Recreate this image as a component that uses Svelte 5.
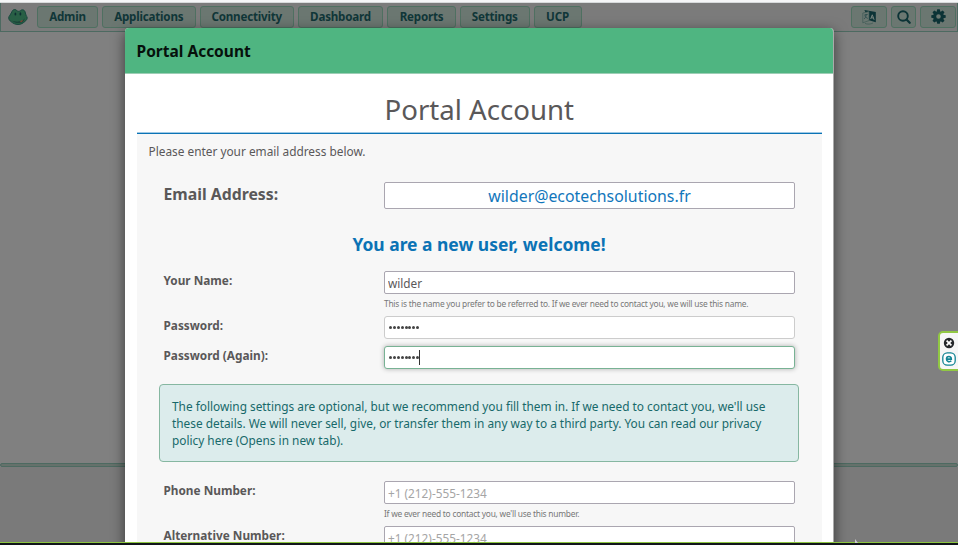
<script>
  const tabs = [
    { label: 'Admin', width: 61 },
    { label: 'Applications', width: 93.5 },
    { label: 'Connectivity', width: 94.5 },
    { label: 'Dashboard', width: 85 },
    { label: 'Reports', width: 69 },
    { label: 'Settings', width: 69.5 },
    { label: 'UCP', width: 48 }
  ];
  const teeth = [0, 45, 90, 135, 180, 225, 270, 315];
</script>

<div class="screen">
  <div class="top-edge"></div>
  <nav>
    <svg class="frog" width="20" height="18" viewBox="0 0 20 18">
      <path d="M1.5 8C0 9.3.5 11.8 3 13.6c2.2 1.8 4.2 2.9 7 2.9 3.2 0 4.9-1.4 7-3.1 2.3-1.9 2.9-4 1.3-5.4L17.4 5C16.8 1.6 14.3 1 12.4 2.7c-.9.7-2.2.8-3.2.3C7.6.8 4.8 1 3.8 4Z" fill="#285f45" stroke="#19483f" />
      <path d="M3 12c2 1.6 6 2.2 9.3 1.3 2-.4 3.6-1.8 4.4-3.4-.1 2.6-2.3 4.6-4.3 4.7-3 .6-6.4.1-9.4-2.6Z" fill="#183c36" />
      <ellipse cx="7.4" cy="6" rx=".9" ry="1.6" fill="#0d2c31" />
      <ellipse cx="12.4" cy="5.9" rx=".9" ry="1.6" fill="#0d2c31" />
      <path d="M11.8 13.4l2.6-1.5.4 1.1-1.5 1.1z" fill="#8d4332" />
    </svg>
    <div class="tabs">
      {#each tabs as tab}
        <button style="width:{tab.width}px">{tab.label}</button>
      {/each}
    </div>
    <div class="tools">
      <button class="wide" aria-label="Language">
        <svg width="15" height="16" viewBox="0 0 15 16">
          <path d="M2.4 1 13.8 3v10.2L7 11.3Z" fill="#0c3336" />
          <path d="M.8 4 7 2.6v9L.8 13.8Z" fill="#6b7771" stroke="#3d5a56" stroke-width=".7" />
          <path d="M2.2 6.2 5.7 5.4M4 5v1c0 2-1 3.3-2 4m1-2.7c.8 1 1.6 1.8 2.8 2.1" fill="none" stroke="#24484a" stroke-width=".8" />
          <path d="m8.7 10 1.6-4.2 1.8 5M9.2 8.6l2.2.5" fill="none" stroke="#79857f" stroke-width="1" />
          <path d="M3 14.4c2.2 1 5.6 1 8-.4" fill="none" stroke="#3d5a56" stroke-width=".7" />
        </svg>
      </button>
      <button class="narrow" aria-label="Search">
        <svg width="14" height="14" viewBox="0 0 14 14">
          <circle cx="6" cy="6" r="4.8" fill="none" stroke="#0c3336" stroke-width="1.9" />
          <path d="m9.5 9.5 3.2 3.3" stroke="#0c3336" stroke-width="2.2" stroke-linecap="round" />
        </svg>
      </button>
      <button class="wide" aria-label="Preferences">
        <svg width="15" height="15" viewBox="-7.5 -7.5 15 15">
          {#each teeth as angle}
            <path d="M-1.8-4.4-1.3-7.2h2.6l.5 2.8Z" transform="rotate({angle})" fill="#0c3336" />
          {/each}
          <circle r="3.8" fill="none" stroke="#0c3336" stroke-width="3" />
        </svg>
      </button>
    </div>
  </nav>
  <main></main>
  <div class="splitter"></div>
  <div class="lower"></div>
  <div class="taskbar"></div>

  <section class="dialog">
    <header>Portal Account</header>
    <div class="content">
      <h1>Portal Account</h1>
      <div class="panel">
        <p class="intro">Please enter your email address below.</p>
        <div class="row email">
          <label for="email">Email Address:</label>
          <input id="email" value="wilder@ecotechsolutions.fr" />
        </div>
        <h2>You are a new user, welcome!</h2>
        <div class="row name">
          <label for="name">Your Name:</label>
          <div class="field">
            <input id="name" value="wilder" />
            <small>This is the name you prefer to be referred to. If we ever need to contact you, we will use this name.</small>
          </div>
        </div>
        <div class="row password">
          <label for="pw">Password:</label>
          <div class="box" id="pw"><span class="dots">{#each teeth as _}<i></i>{/each}</span></div>
        </div>
        <div class="row again">
          <label for="pw2">Password (Again):</label>
          <div class="box focused" id="pw2"><span class="dots">{#each teeth as _}<i></i>{/each}</span><span class="caret"></span></div>
        </div>
        <div class="notice">
          <div>The following settings are optional, but we recommend you fill them in. If we need to contact you, we'll use</div>
          <div>these details. We will never sell, give, or transfer them in any way to a third party. You can read our privacy</div>
          <div>policy here (Opens in new tab).</div>
        </div>
        <div class="row phone">
          <label for="phone">Phone Number:</label>
          <div class="field">
            <input id="phone" placeholder="+1 (212)-555-1234" />
            <small>If we ever need to contact you, we'll use this number.</small>
          </div>
        </div>
        <div class="row alt">
          <label for="alt">Alternative Number:</label>
          <input id="alt" placeholder="+1 (212)-555-1234" />
        </div>
      </div>
    </div>
  </section>

  <aside>
    <svg width="12" height="12" viewBox="0 0 12 12">
      <circle cx="6" cy="6" r="5.2" fill="#25282b" />
      <path d="m3.6 3.6 4.8 4.8m0-4.8L3.6 8.4" stroke="#fff" stroke-width="1.7" />
    </svg>
    <svg width="14" height="14" viewBox="0 0 14 14">
      <rect x=".8" y=".8" width="12.4" height="12.4" rx="4.5" fill="#fff" stroke="#118393" stroke-width="1.3" />
      <path d="M4.8 7.1h4.5C9.3 3.6 4.5 3.8 4.5 7.1c0 2.9 3.3 3.2 4.8 1.7" fill="none" stroke="#118393" stroke-width="1.6" />
    </svg>
  </aside>
  <svg class="cursor" width="5" height="4" viewBox="0 0 5 4"><path d="M1 0v4h3Z" fill="#ccc" /></svg>
</div>

<style>
  :global(body) { margin: 0; overflow: hidden; }
  * { box-sizing: border-box; }
  .screen { position: relative; width: 958px; height: 545px; overflow: hidden; display: flex; flex-direction: column; background: #808080; font-family: "Noto Sans", sans-serif; }
  .top-edge { height: 3px; background: #f5f6f7; border-bottom: 1px solid #d7dadb; flex: none; }
  nav { height: 29px; flex: none; display: flex; align-items: center; background: #7b7b7b; border: 1px solid #4d6a61; border-top: 0; padding: 0 1px 1px 7px; }
  .frog { margin-right: 9px; flex: none; }
  .tabs { display: flex; gap: 4px; }
  button { height: 22px; flex: none; display: flex; align-items: center; justify-content: center; border: 1px solid #4f7061; border-radius: 3px; background: #6b7771; color: #103638; font: bold 11.6px/20px "Noto Sans", sans-serif; letter-spacing: -.2px; padding: 0; }
  .tools { display: flex; gap: 4px; margin-left: auto; }
  .wide { width: 36px; }
  .narrow { width: 25px; }
  main { height: 431px; flex: none; }
  .splitter { height: 4px; flex: none; border: 1px solid #4d6a61; background: #65716b; border-radius: 2px; }
  .lower { height: 75px; flex: none; background: #7a7a7a; }
  .taskbar { height: 3px; flex: none; border-top: 1px solid #8cc63f; background: #11151b; }
  .dialog { position: absolute; left: 125px; top: 28px; width: 709px; height: 514px; overflow: hidden; border-radius: 4px 4px 0 0; background: #fff; border-right: 1px solid #aaa; color: #5a5859; }
  .screen::after { content: ""; position: absolute; left: 125px; top: 28px; width: 709px; height: 600px; border-radius: 4px; box-shadow: 0 4px 14px rgba(0,0,0,.55); pointer-events: none; clip-path: inset(-20px -20px 86px -20px); }
  header { height: 46px; border-bottom: 1px solid #9dceb5; background: #4fb581; color: #06110c; font: bold 15.5px/46px "Noto Sans", sans-serif; padding-left: 11.5px; }
  .content { padding: 0 11px 0 11.5px; }
  h1 { margin: 0; height: 60px; border-bottom: 1px solid #0b73b5; box-shadow: inset 0 -1px #9fc9e5; font-weight: 400; font-size: 27.6px; line-height: 70px; text-align: center; color: #5a5859; }
  .panel { height: 420px; background: #f7f7f7; padding: 9px 27px 0 22.5px; }
  .intro { margin: 0 0 0 -10.5px; font-size: 11.85px; line-height: 16px; height: 39px; }
  .row { display: flex; justify-content: space-between; padding-left: 4.5px; }
  .row > input, .field, .box { width: 411px; flex: none; }
  label { font-size: 11.8px; line-height: 18px; font-weight: 700; color: #5a5859; }
  input { display: block; width: 411px; height: 23px; border: 1px solid #aaa6b0; border-radius: 2px; background: #fff; padding: 1px 3px 0; margin: 0; font: 11.8px "Noto Sans", sans-serif; color: #5a5859; outline: 0; }
  input::placeholder { color: #a5a5a5; opacity: 1; }
  .email { height: 27px; }
  .email label { font-size: 15.8px; line-height: 25px; }
  .email input { height: 27px; font-size: 15.85px; text-align: center; color: #1176bb; }
  h2 { margin: 22px -4px 0 0; font-size: 17.45px; line-height: 26px; text-align: center; color: #0b73b5; }
  .name { margin-top: 14px; height: 45px; }
  small { display: block; font-size: 8.4px; letter-spacing: -.23px; line-height: 13px; color: #777; margin-top: 3px; white-space: nowrap; }
  .box { height: 23px; border: 1px solid #ccc; border-radius: 3px; background: #fff; display: flex; align-items: center; padding-left: 4px; }
  .focused { border-color: #78b294; box-shadow: 0 0 5px rgba(0,0,0,.3); }
  .dots { display: flex; gap: .9px; }
  i { width: 3px; height: 3px; border-radius: 50%; background: #444; }
  .caret { width: 1px; height: 15px; background: #333; }
  .again { margin-top: 7px; }
  .notice { margin-top: 15px; width: 640px; height: 78px; border: 1px solid #86b7a1; border-radius: 4px; background: #dcecec; color: #17696a; padding: 13px 12px; font-size: 11.85px; line-height: 17.2px; white-space: nowrap; }
  .phone { margin-top: 19px; height: 45px; }
  aside { position: absolute; left: 938px; top: 331px; width: 22px; height: 40px; border: 2px solid #91c843; border-radius: 5px 0 0 5px; background: #f6f6f6; display: flex; flex-direction: column; gap: 3px; padding-top: 4px; align-items: center; }
  .cursor { position: absolute; left: 854px; top: 539px; }
</style>
